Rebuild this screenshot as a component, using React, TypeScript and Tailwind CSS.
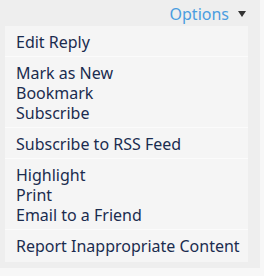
const groups = [
  ["Edit Reply"],
  ["Mark as New", "Bookmark", "Subscribe"],
  ["Subscribe to RSS Feed"],
  ["Highlight", "Print", "Email to a Friend"],
  ["Report Inappropriate Content"],
];

export default function App() {
  return (
    <div className="w-[264px] h-[276px] bg-[#f7f7f7] flex font-['Noto_Sans',sans-serif] overflow-hidden">
      <div className="w-[260px] h-[268px] bg-[#eeeeee] flex flex-col">
        {/* trigger */}
        <div className="h-[26px] pt-[2px] flex items-center justify-end pr-[14px] gap-[9px]">
          <span className="text-[16px] leading-[20px] text-[#4a9de0]">Options</span>
          <svg width="8" height="6" viewBox="0 0 8 6">
            <path d="M0 0 H8 L4 6 Z" fill="#333333" />
          </svg>
        </div>

        {/* menu */}
        <div className="ml-[5px] w-[243px] bg-[#f5f5f5] flex flex-col">
          {groups.map((items, i) => (
            <div
              key={i}
              className={`pl-[11px] flex flex-col ${i > 0 ? "border-t border-[#fbfbfb]" : ""} ${i === groups.length - 1 ? "pt-[6px] pb-[6px]" : "pt-[6px] pb-[4px]"}`}
            >
              {items.map((label) => (
                <span key={label} className="text-[16px] leading-[20px] text-[#1b2c4f] whitespace-nowrap">
                  {label}
                </span>
              ))}
            </div>
          ))}
        </div>
      </div>
    </div>
  );
}
